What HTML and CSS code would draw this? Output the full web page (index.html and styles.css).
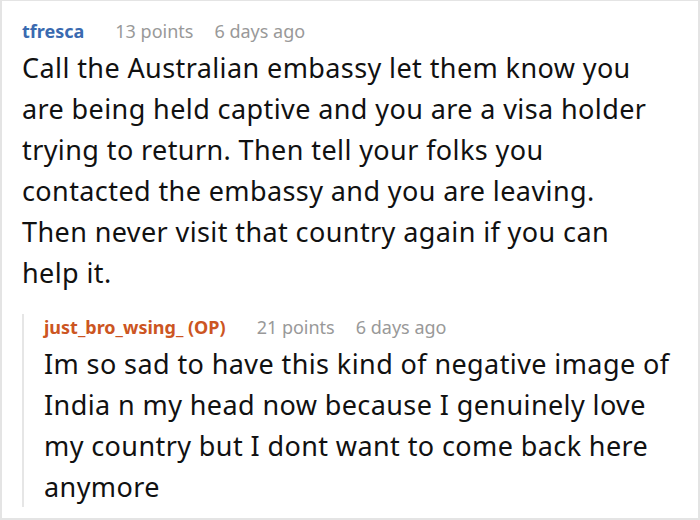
FILE: index.html
```html
<!DOCTYPE html>
<html lang="en">
<head>
    <meta charset="UTF-8">
    <title>Comments</title>
    <link rel="stylesheet" href="styles.css">
</head>
<body>
    <div class="thread">
        <div class="comment">
            <div class="meta">
                <span class="author">tfresca</span>
                <span class="info">13 points</span>
                <span class="info">6 days ago</span>
            </div>
            <p class="body">Call the Australian embassy let them know you are being held captive and you are a visa holder trying to return. Then tell your folks you contacted the embassy and you are leaving. Then never visit that country again if you can help it.</p>

            <div class="reply">
                <div class="meta">
                    <span class="author op">just_bro_wsing_ (OP)</span>
                    <span class="info">21 points</span>
                    <span class="info">6 days ago</span>
                </div>
                <p class="body">Im so sad to have this kind of negative image of India n my head now because I genuinely love my country but I dont want to come back here anymore</p>
            </div>
        </div>
    </div>
</body>
</html>
```

FILE: styles.css
```css
* {
    margin: 0;
    padding: 0;
    box-sizing: border-box;
}

body {
    font-family: "Noto Sans", "Open Sans", sans-serif;
    background: #fff;
    color: #111;
}

.thread {
    width: 700px;
    height: 520px;
    border: 2px solid #e4e4e4;
    border-top-width: 1px;
    overflow: hidden;
}

.comment {
    padding: 17px 20px 0 20px;
}

.comment > .body {
    padding-right: 14px;
}

.meta {
    display: flex;
    gap: 21px;
    font-size: 18px;
    line-height: 26px;
}

.author {
    color: #3a6ab0;
    font-weight: 700;
    margin-right: 10px;
}

.author.op {
    color: #cc5522;
}

.info {
    color: #999;
}

.body {
    font-size: 27px;
    letter-spacing: 0.4px;
    line-height: 41px;
    margin-top: 3px;
}

.reply {
    margin-top: 21px;
    padding-left: 20px;
    border-left: 2px solid #e6e6e6;
}
```
